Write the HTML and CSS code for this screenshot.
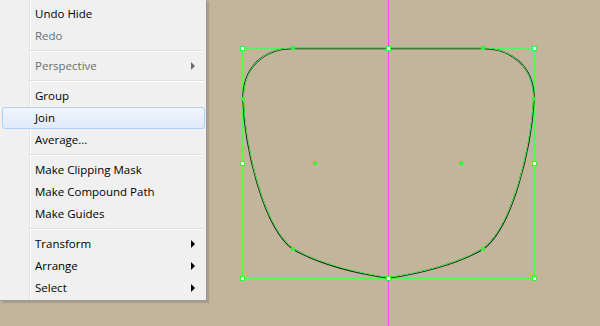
FILE: index.html
```html
<!DOCTYPE html>
<html lang="en">
<head>
  <meta charset="UTF-8">
  <title>Join</title>
  <link rel="stylesheet" href="styles.css">
</head>
<body>

  <!-- artboard with the selected path -->
  <svg class="lienzo" width="600" height="326" viewBox="0 0 600 326">
    <line x1="388.5" y1="0" x2="388.5" y2="326" class="guia" />
    <rect x="242.5" y="48.5" width="292" height="230" class="caja" />
    <path class="trazo" d="M293 48.5 L483 48.5 C511 48.5 534 66 534 99 C531 150 512 228 483 249 C456 265 416 274 388.5 278 C361 274 321 265 293 249 C264 228 245 150 243 99 C243 66 265 48.5 293 48.5 Z" />
    <path class="trazo-sel" d="M293 48 L483 48 C511 48 533.5 66 533.5 99 C530.5 150 511.5 228 483 248.5 C456 264.5 416 273.5 388.5 277.5 C361 273.5 321 264.5 293 248.5 C264.5 228 245.5 150 243.5 99 C243.5 66 265 48 293 48 Z" />
    <g class="ancla">
      <rect x="291" y="46" width="4" height="4" />
      <rect x="481" y="46" width="4" height="4" />
      <rect x="241" y="97" width="4" height="4" />
      <rect x="532" y="97" width="4" height="4" />
      <rect x="291" y="247" width="4" height="4" />
      <rect x="481" y="247" width="4" height="4" />
      <rect x="313" y="161" width="4" height="4" />
      <rect x="459" y="161" width="4" height="4" />
    </g>
    <g class="asa">
      <rect x="240.5" y="46.5" width="4" height="4" />
      <rect x="386.5" y="46.5" width="4" height="4" />
      <rect x="532.5" y="46.5" width="4" height="4" />
      <rect x="240.5" y="161.5" width="4" height="4" />
      <rect x="532.5" y="161.5" width="4" height="4" />
      <rect x="240.5" y="276.5" width="4" height="4" />
      <rect x="386.5" y="276.5" width="4" height="4" />
      <rect x="532.5" y="276.5" width="4" height="4" />
    </g>
  </svg>

  <!-- context menu -->
  <div class="menu">
    <div class="item">Undo Hide</div>
    <div class="item off">Redo</div>
    <div class="sep"></div>
    <div class="item off sub">Perspective</div>
    <div class="sep"></div>
    <div class="item">Group</div>
    <div class="item activo">Join</div>
    <div class="item">Average...</div>
    <div class="sep"></div>
    <div class="item">Make Clipping Mask</div>
    <div class="item">Make Compound Path</div>
    <div class="item">Make Guides</div>
    <div class="sep"></div>
    <div class="item sub">Transform</div>
    <div class="item sub">Arrange</div>
    <div class="item sub">Select</div>
  </div>

</body>
</html>
```

FILE: styles.css
```css
body {
  margin: 0;
  background-color: #c3b59c;
  font-family: "Open Sans", "DejaVu Sans", sans-serif;
  font-size: 11.5px;
  overflow: hidden;
}

.lienzo {
  display: block;
}

.guia {
  stroke: #ff40ff;
  stroke-width: 1;
}

.caja {
  fill: none;
  stroke: #52f552;
  stroke-width: 1;
}

.trazo {
  fill: none;
  stroke: #1c1c1c;
  stroke-width: 1.6;
}

.trazo-sel {
  fill: none;
  stroke: #4cf04c;
  stroke-width: 1;
}

.ancla rect {
  fill: #3cf03c;
}

.asa rect {
  fill: #ffffff;
  stroke: #3cf03c;
  stroke-width: 1;
}

.menu {
  position: absolute;
  top: 0;
  left: 0;
  width: 206px;
  padding: 3px 0 1px 0;
  background-color: #f0f0f0;
  border-right: 1px solid #979797;
  border-bottom: 1px solid #979797;
  box-shadow: 2px 2px 1px rgba(0,0,0,0.12);
  background-image: linear-gradient(to right, transparent 29px, #e2e3e3 29px, #e2e3e3 30px, #ffffff 30px, #ffffff 31px, transparent 31px);
}

.item {
  position: relative;
  height: 22px;
  line-height: 22px;
  margin: 0 1px 0 2px;
  padding-left: 32px;
  color: #000;
  border: 1px solid transparent;
  border-width: 0 1px;
  box-sizing: border-box;
}

.item.off {
  color: #6d6d6d;
}

.item.sub::after {
  content: "";
  position: absolute;
  right: 9px;
  top: 7px;
  border-left: 4px solid #000;
  border-top: 4px solid transparent;
  border-bottom: 4px solid transparent;
}

.item.off.sub::after {
  border-left-color: #6d6d6d;
}

.item.activo {
  border: 1px solid #aecff7;
  border-radius: 3px;
  line-height: 20px;
  background-image: linear-gradient(to bottom, #f2f6fc, #dfeafa);
}

.sep {
  height: 8px;
  margin-left: 30px;
  margin-right: 2px;
  background-image: linear-gradient(to bottom, transparent 3px, #e0e0e0 3px, #e0e0e0 4px, #ffffff 4px, #ffffff 5px, transparent 5px);
}
```
